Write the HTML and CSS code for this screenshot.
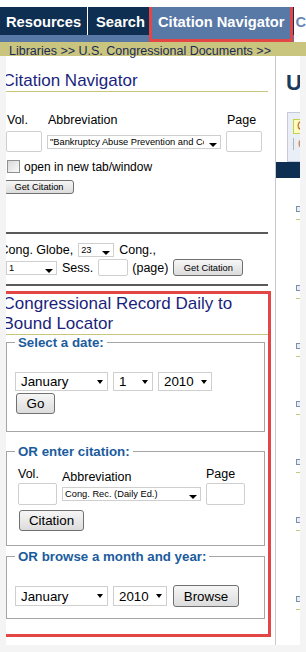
FILE: index.html
```html
<!DOCTYPE html>
<html lang="en">
<head>
    <meta charset="UTF-8">
    <meta name="viewport" content="width=device-width, initial-scale=1.0">
    <title>Citation Navigator</title>
    <link rel="stylesheet" href="styles.css">
</head>
<body>
    <div class="header">
        <div class="tabs">
            <span class="tab first">Resources</span>
            <span class="tab search">Search</span>
            <span class="tab active">Citation Navigator</span>
        </div>
        <span class="tab-next">C</span>
    </div>
    <div class="crumbs">Libraries &gt;&gt; U.S. Congressional Documents &gt;&gt;</div>

    <div class="wrap">
        <div class="main">
            <h2 class="title"><span>Citation Navigator</span></h2>

            <div class="cite">
                <label>Vol.</label>
                <label>Abbreviation</label>
                <label>Page</label>
                <input type="text" class="box">
                <span class="sel sm"><select><option>"Bankruptcy Abuse Prevention and Consumer Protection Act"</option></select></span>
                <input type="text" class="box">
            </div>
            <div class="check"><span class="cb"></span>open in new tab/window</div>
            <button class="btn sm get1">Get Citation</button>

            <div class="rule"></div>

            <div class="globe">
                <span class="lead">Cong. Globe,</span>
                <span class="sel sm w-23"><select><option>23</option></select></span>
                <span>Cong.,</span>
            </div>
            <div class="globe">
                <span class="sel sm w-1"><select><option>1</option></select></span>
                <span>Sess.</span>
                <input type="text" class="box w-pg">
                <span>(page)</span>
                <button class="btn sm get2">Get Citation</button>
            </div>

            <div class="rule r2"></div>

            <div class="locator">
                <h2 class="title loc"><span>Congressional Record Daily to Bound Locator</span></h2>

                <fieldset class="f1">
                    <legend>Select a date:</legend>
                    <div class="row date">
                        <span class="sel w-mon"><select><option>January</option></select></span>
                        <span class="sel w-day"><select><option>1</option></select></span>
                        <span class="sel w-yr"><select><option>2010</option></select></span>
                    </div>
                    <button class="btn go">Go</button>
                </fieldset>

                <fieldset class="f2">
                    <legend>OR enter citation:</legend>
                    <div class="cite2">
                        <div class="col"><label>Vol.</label><input type="text" class="box"></div>
                        <div class="col abbr"><label>Abbreviation</label><span class="sel sm"><select><option>Cong. Rec. (Daily Ed.)</option></select></span></div>
                        <div class="col"><label>Page</label><input type="text" class="box"></div>
                    </div>
                    <button class="btn cit">Citation</button>
                </fieldset>

                <fieldset class="f3">
                    <legend>OR browse a month and year:</legend>
                    <div class="row browse">
                        <span class="sel w-mon"><select><option>January</option></select></span>
                        <span class="sel w-yr"><select><option>2010</option></select></span>
                        <button class="btn br">Browse</button>
                    </div>
                </fieldset>
            </div>
        </div>

        <div class="side">
            <div class="side-title">U</div>
            <div class="side-box">
                <div class="hl">C</div>
                <div class="hl2">C</div>
            </div>
            <div class="side-bar"></div>
            <div class="item"><span class="ico"></span><span class="uline"></span></div>
            <div class="item far"><span class="ico"></span><span class="uline"></span></div>
            <div class="item"><span class="ico"></span><span class="uline"></span></div>
            <div class="item"><span class="ico"></span><span class="uline"></span></div>
            <div class="item"><span class="ico"></span><span class="uline"></span></div>
            <div class="item"><span class="ico"></span><span class="uline"></span></div>
            <div class="item far"><span class="ico"></span><span class="uline"></span></div>
        </div>
    </div>
</body>
</html>
```

FILE: styles.css
```css
*{
    box-sizing: border-box;
}
body{
    margin: 0;
    width: 306px;
    height: 652px;
    overflow: hidden;
    background-color: #f4f4f4;
    font-family: "Liberation Sans", Arial, sans-serif;
    font-size: 12.5px;
    color: #000;
}

/* top tabs */
.header{
    display: flex;
    padding-top: 7px;
    background-color: #fff;
}
.tabs{
    display: flex;
    width: 297px;
    height: 35px;
    background: linear-gradient(#0f2f52 0 28px, #5878a6 28px);
}
.tab{
    height: 28px;
    line-height: 30px;
    color: #fff;
    font-size: 14.7px;
    font-weight: bold;
    white-space: nowrap;
}
.tab.first{
    width: 88px;
    padding-left: 6px;
    border-right: 1px solid #fff;
}
.tab.search{
    width: 61px;
    padding-left: 8px;
}
.tab.active{
    width: 144px;
    height: 35px;
    padding-left: 6px;
    background-color: #5878a6;
    border: 3px solid #e44646;
    border-top: none;
}
.tab-next{
    margin-left: 1px;
    color: #6a88b4;
    font-size: 14.7px;
    font-weight: bold;
    line-height: 30px;
}
.crumbs{
    height: 14px;
    padding-left: 9px;
    background-color: #c9c57f;
    color: #1a2a55;
    font-size: 12.5px;
    line-height: 18px;
    white-space: nowrap;
}

/* page body */
.wrap{
    display: flex;
    height: 589px;
    margin: 0 6px;
    background-color: #fff;
}
.main{
    width: 270px;
    border-right: 1px solid #c8c8c8;
    overflow: hidden;
}
.title{
    margin: 15px 7px 0 0;
    color: #1b1f7c;
    font-size: 17px;
    font-weight: normal;
    line-height: 20px;
    border-bottom: 1px solid #c9c57f;
}
.title span{
    display: block;
    margin-left: -3.5px;
}
label{
    display: block;
    line-height: 15px;
}
.box{
    height: 21px;
    border: 1px solid #cfcfcf;
    border-radius: 2px;
    background-color: #fff;
}

.cite{
    display: grid;
    grid-template-columns: 36px 174px 36px;
    column-gap: 5px;
    row-gap: 3px;
    align-items: center;
    margin-top: 21px;
}
.cite label{
    align-self: end;
    padding-left: 1px;
}
.check{
    display: flex;
    align-items: center;
    gap: 4px;
    height: 15px;
    margin-top: 7px;
    padding-left: 1px;
    font-size: 12px;
}
.cb{
    width: 13px;
    height: 13px;
    border: 1px solid #8e8f8f;
    background: linear-gradient(135deg, #d8d8d8, #fbfbfb);
}

/* selects */
.sel{
    position: relative;
    display: block;
}
.sel select{
    display: block;
    width: 100%;
    height: 19px;
    margin: 0;
    padding: 0 16px 0 5px;
    border: 1px solid #cfcfcf;
    border-radius: 0;
    background-color: #fff;
    color: #000;
    font-family: inherit;
    font-size: 13.33px;
    appearance: none;
    -webkit-appearance: none;
}
.sel::after{
    content: "";
    position: absolute;
    right: 5px;
    top: 8px;
    border-top: 4px solid #000;
    border-left: 3.5px solid transparent;
    border-right: 3.5px solid transparent;
}
.sel.sm select{
    height: 14px;
    padding-left: 2px;
    font-size: 9.3px;
}
.sel.sm::after{
    top: auto;
    bottom: 2px;
    right: 4px;
    border-left-width: 4px;
    border-right-width: 4px;
}

/* buttons */
.btn{
    display: block;
    padding: 0;
    border: 1px solid #707070;
    border-radius: 3px;
    background: linear-gradient(#f6f6f6, #dcdcdc);
    color: #000;
    font-family: inherit;
    font-size: 13.33px;
}
.btn.sm{
    font-size: 9.3px;
}
.get1{
    width: 70px;
    height: 14px;
    margin: 6px 0 0 -2px;
}
.get2{
    width: 70px;
    height: 17px;
}

.rule{
    height: 2px;
    margin: 38px 7px 0 0;
    background-color: #5a5a5a;
}
.rule.r2{
    margin-top: 8px;
}
.globe{
    display: flex;
    align-items: center;
    gap: 5px;
    height: 16px;
    margin-top: 8px;
    white-space: nowrap;
}
.globe + .globe{
    height: 17px;
    margin-top: 1px;
}
.globe .lead{
    margin-left: -6.5px;
}
.w-23{ width: 36px; }
.w-1{ width: 51px; }
.w-pg{
    width: 30px;
    height: 17px;
    margin-right: -1px;
}

/* daily to bound locator */
.locator{
    margin: 5px 4px 0 0;
    padding-bottom: 15px;
    border: 3px solid #e44646;
    border-left: none;
}
.title.loc{
    margin: 0;
}
fieldset{
    min-width: 0;
    margin: 0 3px 0 0;
    padding: 0 8px;
    border: 1px solid #a5a5a5;
}
legend{
    padding: 0 3px;
    color: #1b5c9e;
    font-size: 13.3px;
    font-weight: bold;
    line-height: 15px;
}
.row{
    display: flex;
    align-items: center;
    gap: 5px;
}
.f1{
    padding-bottom: 17px;
}
.date{
    margin-top: 22px;
}
.w-mon{ width: 93px; }
.w-day{ width: 40px; }
.w-yr{ width: 54px; }
.go{
    width: 39px;
    height: 21px;
    margin: 2px 0 0 1px;
}
.f2{
    margin-top: 12px;
    padding-bottom: 14px;
}
.cite2{
    display: grid;
    grid-template-columns: 39px 139px 39px;
    column-gap: 5px;
    margin: 8px 0 0 3px;
}
.col .box{
    display: block;
    width: 100%;
    height: 22px;
    margin-top: 1px;
}
.col.abbr label{
    margin-top: 3px;
}
.col.abbr .sel{
    margin-top: 2px;
}
.cit{
    width: 65px;
    height: 21px;
    margin: 5px 0 0 4px;
}
.f3{
    margin-top: 3px;
    padding-bottom: 11px;
}
.browse{
    margin-top: 21px;
}
.browse .sel select{
    height: 20px;
}
.br{
    width: 66px;
    height: 22px;
    margin-left: 1px;
}

/* right column */
.side{
    width: 24px;
    overflow: hidden;
}
.side-title{
    margin: 14px 0 0 10px;
    color: #1c3a5e;
    font-size: 22px;
    font-weight: bold;
    line-height: 26px;
}
.side-box{
    height: 50px;
    margin: 16px 0 0 11px;
    padding: 6px 0 0 5px;
    border: 1px solid #c4cbd8;
    border-right: none;
    background-color: #eaeff7;
}
.hl{
    height: 15px;
    padding-left: 3px;
    border: 1px solid #c2d24a;
    border-right: none;
    background-color: #fdfcc0;
    color: #c0652e;
    font-size: 12px;
    line-height: 13px;
}
.hl2{
    height: 12px;
    margin-top: 4px;
    padding-left: 4px;
    border-left: 1px solid #b4b4b4;
    color: #b87a5a;
    font-size: 12px;
    line-height: 12px;
}
.side-bar{
    height: 16px;
    background-color: #0f2f52;
}
.item{
    margin: 44px 0 0 20px;
}
.item:nth-child(4){
    margin-top: 28px;
}
.item.far{
    margin-top: 65px;
}
.ico{
    display: block;
    width: 7px;
    height: 6px;
    border: 1px solid #7d8fae;
    background-color: #e6ecf6;
}
.uline{
    display: block;
    height: 1px;
    margin-top: 7px;
    background-color: #c9c57f;
}
```
